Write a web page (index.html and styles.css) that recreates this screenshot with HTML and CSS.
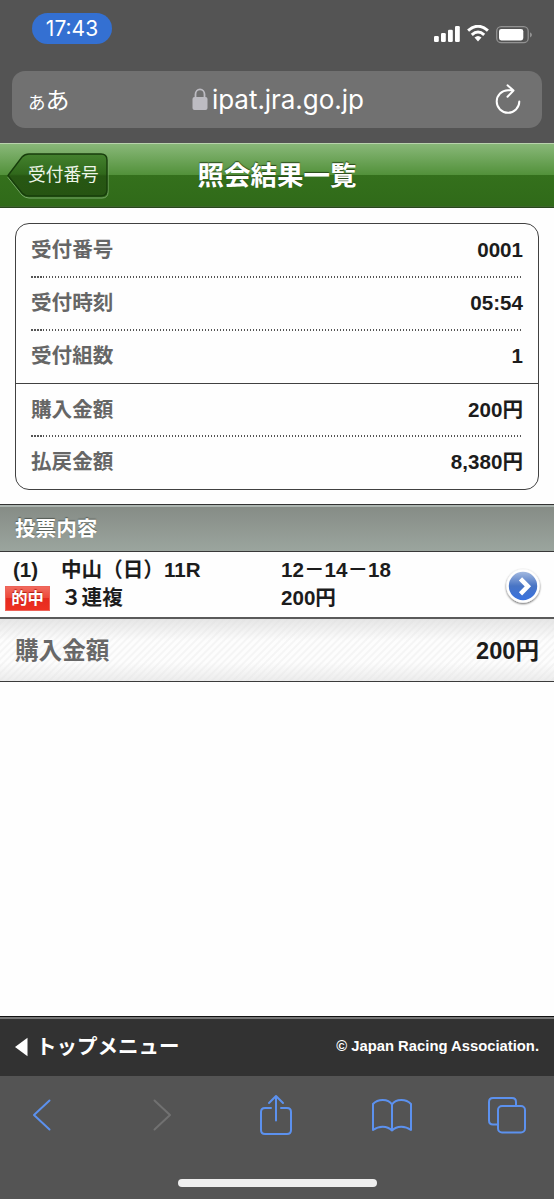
FILE: index.html
```html
<!DOCTYPE html>
<html lang="ja">
<head>
<meta charset="utf-8">
<meta name="viewport" content="width=device-width">
<title>照会結果一覧</title>
<link rel="stylesheet" href="styles.css">
</head>
<body>
<div class="screen">
  <div class="chrome-top">
    <div class="status">
      <span class="clock">17:43</span>
      <div class="indicators">
        <svg width="26" height="16" viewBox="0 0 26 16" fill="#fff"><rect x="0" y="10" width="4.8" height="6" rx="1.3"/><rect x="7" y="7" width="4.8" height="9" rx="1.3"/><rect x="14" y="3.7" width="4.8" height="12.3" rx="1.3"/><rect x="21" y="0" width="4.8" height="16" rx="1.3"/></svg>
        <svg class="wifi" width="22" height="17" viewBox="0 0 22 17" fill="none" stroke="#fff" stroke-width="3"><path d="M1.1 5.6Q11-3 20.9 5.6"/><path d="M4.8 9.8Q11 4.3 17.2 9.8"/><path d="M7.5 12.6Q11 9.600 14.5 12.6L11 16.500Z" fill="#fff" stroke="none"/></svg>
        <svg width="37" height="18" viewBox="0 0 37 18"><rect x=".7" y=".7" width="31.5" height="16" rx="4.5" fill="none" stroke="#929292" stroke-width="1.3"/><rect x="3" y="3" width="24.3" height="11.4" rx="2.3" fill="#fff"/><path d="M34 6.2q2 1 2 2.6t-2 2.6z" fill="#929292"/></svg>
      </div>
    </div>
    <div class="address">
      <span class="reader"><small>あ</small>あ</span>
      <span class="host">
        <svg width="16" height="23" viewBox="0 0 16 23"><rect x=".5" y="9" width="15" height="13" rx="2" fill="#bdbcc2"/><path d="M3.5 10V6.3a4.5 5 0 0 1 9 0V10" fill="none" stroke="#bdbcc2" stroke-width="1.8"/></svg>
        <span class="url">ipat.jra.go.jp</span>
      </span>
      <svg class="reload" width="26" height="31" viewBox="0 0 26 31" fill="none" stroke="#fff" stroke-width="2" stroke-linecap="round" stroke-linejoin="round"><path d="M17.500 6.200H13A11.300 11.300 0 1 0 24.300 17.500M12.500 1.300l6 5.300-6 6.200"/></svg>
    </div>
  </div>

  <header class="title-bar">
    <svg class="back" width="102" height="46" viewBox="0 0 102 46">
      <defs><linearGradient id="g" x2="0" y2="1"><stop offset="0" stop-color="#44822e"/><stop offset=".48" stop-color="#30681b"/><stop offset=".52" stop-color="#275713"/><stop offset="1" stop-color="#265412"/></linearGradient></defs>
      <path d="M1 23.5L15 5Q18 2 22 2H95Q101 2 101 8V38Q101 44 95 44H22Q18 44 15 41Z" fill="none" stroke="#79a86a" stroke-width="1" transform="translate(0 1)"/>
      <path d="M1 22.5L15 4Q18 1 22 1H94Q100 1 100 7V37Q100 43 94 43H22Q18 43 15 40Z" fill="url(#g)" stroke="#173d0b" stroke-width="1.4"/>
      <text class="back-text" x="21" y="28">受付番号</text>
    </svg>
    <h1>照会結果一覧</h1>
  </header>

  <main>
    <dl class="card">
      <div class="row"><dt>受付番号</dt><dd>0001</dd></div>
      <div class="row dotted"><dt>受付時刻</dt><dd>05:54</dd></div>
      <div class="row dotted"><dt>受付組数</dt><dd>1</dd></div>
      <div class="row solid"><dt>購入金額</dt><dd>200円</dd></div>
      <div class="row dotted"><dt>払戻金額</dt><dd>8,380円</dd></div>
    </dl>
    <h2>投票内容</h2>
    <div class="bet">
      <div class="mark"><span class="num">(1)</span><span class="hit">的中</span></div>
      <div class="race"><span>中山（日）11R</span><span>３連複</span></div>
      <div class="pick"><span>12－14－18</span><span>200円</span></div>
      <svg width="40" height="40" viewBox="0 0 40 40">
        <defs><linearGradient id="b" x2="0" y2="1"><stop offset="0" stop-color="#a3b9e0"/><stop offset=".5" stop-color="#4874c4"/><stop offset="1" stop-color="#3871df"/></linearGradient><filter id="s" x="-20%" y="-20%" width="140%" height="140%"><feDropShadow dx="0" dy="1" stdDeviation="1.2" flood-color="#000" flood-opacity=".65"/></filter></defs>
        <circle cx="20" cy="19" r="16.7" fill="#fff" filter="url(#s)"/><circle cx="20" cy="19" r="14.2" fill="url(#b)"/><path d="M17.5 11.8l7.4 7.5-7.4 7.5" fill="none" stroke="#fff" stroke-width="4.5"/>
      </svg>
    </div>
    <div class="total"><span class="label">購入金額</span><span>200円</span></div>
  </main>

  <footer>
    <span class="menu"><svg width="13" height="20" viewBox="0 0 13 20"><path d="M0 10L12.5 0.7V19.3Z" fill="#fff"/></svg>トップメニュー</span>
    <span class="copy">© Japan Racing Association.</span>
  </footer>

  <nav class="toolbar">
    <div class="tools">
      <svg width="20" height="34" viewBox="0 0 20 34"><path d="M17.5 2.5L2 17l15.500 14.500"/></svg>
      <svg class="off" width="20" height="34" viewBox="0 0 20 34"><path d="M2.500 2.500L18 17 2.500 31.500"/></svg>
      <svg width="34" height="42" viewBox="0 0 34 42"><path d="M12 14H6Q2 14 2 18V36Q2 40 6 40H28Q32 40 32 36V18Q32 14 28 14H22M17 26.500V2.500M10 9l7-7 7 7"/></svg>
      <svg width="42" height="34" viewBox="0 0 42 34"><path d="M21 6.500C17 .5 7 .5 2 6V32C8 27.500 16 27.500 21 32.500C26 27.500 34 27.500 40 32V6C35 .5 25 .5 21 6.500V32.500"/></svg>
      <svg width="40" height="38" viewBox="0 0 40 38"><rect x="11" y="10" width="27" height="26.500" rx="4"/><path d="M11 28.500H6Q2 28.500 2 24.500V6Q2 2 6 2H25Q29 2 29 6V10"/></svg>
    </div>
    <div class="home"></div>
  </nav>
</div>
</body>
</html>
```
FILE: styles.css
```css
* { box-sizing: border-box; }
body { margin: 0; background: #fefefe; color: #1c1c1c; font: bold 20.6px/28px "Liberation Sans", "Noto Sans CJK JP", sans-serif; }
svg { display: block; flex: none; }
.screen { width: 554px; height: 1199px; display: flex; flex-direction: column; overflow: hidden; white-space: nowrap; }
.chrome-top { height: 143px; flex: none; padding: 13px 12px 0; background: #545454; color: #fff; }
.status { display: flex; justify-content: space-between; height: 58px; padding: 0 9px 0 20px; }
.clock { width: 80px; height: 31px; border-radius: 16px; background: #3470d2; font: 400 21px/32px Inter, sans-serif; text-align: center; }
.indicators { display: flex; gap: 7px; padding-top: 13px; }
.wifi { margin-top: -1px; }
.address { height: 57px; padding: 0 21px 0 16px; border-radius: 13px; background: #717171; display: flex; align-items: center; }
.reader { width: 164px; font: 400 24px/57px "Noto Sans CJK JP", sans-serif; }
.reader small { font-size: 17.500px; }
.host { display: flex; align-items: center; gap: 4px; }
.url { font: 400 26px/57px Inter, sans-serif; letter-spacing: -.05px; }
.reload { margin-left: auto; }

.title-bar { height: 65px; flex: none; display: grid; grid-template-columns: 102px 1fr 102px; padding: 0 7px; border-top: 1px solid #b9d3ad; border-bottom: 1px solid #28471c; background: linear-gradient(#89b879, #52913a 49%, #34701c 50%, #306a19); box-shadow: inset 0 -1px #3c652b; }
.back { margin-top: 9px; }
.back-text { fill: #eef5e9; font: 400 17.700px "Noto Sans CJK JP", sans-serif; }
h1 { margin: 0; text-align: center; color: #fff; font: bold 26.500px/60px "Noto Sans CJK JP", sans-serif; text-shadow: 0 -1px 1px #284719; }

main { flex: 1; display: flex; flex-direction: column; }
.card { margin: 15px 15px 14px; height: 267px; flex: none; border: 1.500px solid #414141; border-radius: 14px; display: grid; grid-template-rows: 52px 53px 54px 52px 1fr; }
.row { display: flex; justify-content: space-between; padding: 0 15px; line-height: 52px; }
.row dt { color: #666; }
.row dd { margin: 0; }
.row.solid { border-top: 1.500px solid #414141; line-height: 51px; }
.dotted { line-height: 53px; background: repeating-linear-gradient(90deg, #555 0 1.500px, transparent 1.500px 3px) 15px 0 / calc(100% - 30px) 2px no-repeat; }
h2 { margin: 0; height: 48px; flex: none; padding-left: 15px; border-top: 1px solid #333; border-bottom: 1px solid #383838; background: linear-gradient(#858b85, #9ba59e); box-shadow: inset 0 2px #abb4af; color: #fff; font-size: 20.600px; line-height: 48px; text-shadow: 0 -1px 1px #555c56; }
.bet { height: 67px; flex: none; display: grid; grid-template-columns: 56px 220px 222px 40px; padding: 4px 0 0 5px; border-bottom: 2px solid #5a5a5a; }
.mark, .race, .pick { display: flex; flex-direction: column; }
.num { padding-left: 8px; }
.hit { width: 45px; height: 25px; margin-top: 1.500px; background: linear-gradient(#f16a5e, #ed4739 48%, #e52a20 50%, #ee3021); border: 1px solid #ed6258; color: #fff; font-size: 16.300px; line-height: 23px; text-align: center; text-shadow: 0 -1px 1px #b01c12; }
.bet svg { margin-top: 11px; }
.total { height: 63px; flex: none; padding: 0 15px; display: flex; justify-content: space-between; font-size: 23.600px; line-height: 64px; border-bottom: 1.500px solid #3b3b3b; background: linear-gradient(rgba(220,220,220,.7), rgba(255,255,255,0) 35%, rgba(255,255,255,0) 70%, rgba(225,225,225,.6)), repeating-linear-gradient(135deg, #fdfdfd 0 2px, #f5f5f5 3px 4px, #fdfdfd 5px); }
.label { color: #686868; }

footer { height: 60px; flex: none; display: flex; justify-content: space-between; padding: 0 15px; border-top: 1px solid #111; background: #323232; box-shadow: inset 0 2px #777; color: #fff; line-height: 60px; }
.menu { display: flex; align-items: center; gap: 8px; font-size: 20.500px; }
.copy { font-size: 14.800px; line-height: 59px; }
.toolbar { height: 123px; flex: none; background: #545454; }
.tools { height: 78px; padding-left: 32px; display: grid; grid-template-columns: 120px 107px 112px 116px 40px; align-items: center; }
.tools svg { fill: none; stroke: #5c91ee; stroke-width: 2; stroke-linecap: round; stroke-linejoin: round; }
.tools .off { stroke: #717171; }
.home { width: 199px; height: 8px; margin: 25px auto 0; border-radius: 4px; background: #eee; }
```
